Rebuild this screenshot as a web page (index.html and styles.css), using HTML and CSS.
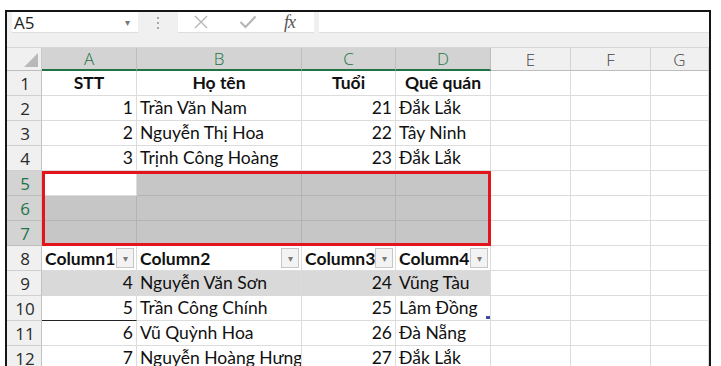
FILE: index.html
```html
<!DOCTYPE html>
<html lang="vi">
<head>
    <meta charset="UTF-8">
    <meta name="viewport" content="width=device-width, initial-scale=1.0">
    <title>Excel - chèn dòng trống</title>
    <link rel="stylesheet" href="styles.css">
</head>
<body>
    <div class="window">
        <div class="formula-bar">
            <div class="name-box">
                <span>A5</span>
                <span class="caret">▾</span>
            </div>
            <div class="grip"><i></i><i></i><i></i></div>
            <div class="fx-buttons">
                <svg class="btn-icon" width="16" height="14" viewBox="0 0 16 14">
                    <path d="M2 1 L14 13 M14 1 L2 13" stroke="#b4b4b4" stroke-width="1.3" fill="none"/>
                </svg>
                <svg class="btn-icon" width="18" height="14" viewBox="0 0 18 14">
                    <path d="M1.5 7 L6.5 12 L16.5 1.5" stroke="#b4b4b4" stroke-width="2" fill="none"/>
                </svg>
                <span class="fx">fx</span>
            </div>
            <div class="formula-input"></div>
        </div>

        <div class="sheet">
            <!-- column headers -->
            <div class="corner"></div>
            <div class="ch sel">A</div>
            <div class="ch sel">B</div>
            <div class="ch sel">C</div>
            <div class="ch sel">D</div>
            <div class="ch">E</div>
            <div class="ch">F</div>
            <div class="ch">G</div>

            <!-- 1 -->
            <div class="rh">1</div>
            <div class="c hd">STT</div>
            <div class="c hd">Họ tên</div>
            <div class="c hd">Tuổi</div>
            <div class="c hd">Quê quán</div>
            <div class="c"></div><div class="c"></div><div class="c"></div>

            <!-- 2 -->
            <div class="rh">2</div>
            <div class="c num">1</div>
            <div class="c">Trần Văn Nam</div>
            <div class="c num">21</div>
            <div class="c">Đắk Lắk</div>
            <div class="c"></div><div class="c"></div><div class="c"></div>

            <!-- 3 -->
            <div class="rh">3</div>
            <div class="c num">2</div>
            <div class="c">Nguyễn Thị Hoa</div>
            <div class="c num">22</div>
            <div class="c">Tây Ninh</div>
            <div class="c"></div><div class="c"></div><div class="c"></div>

            <!-- 4 -->
            <div class="rh">4</div>
            <div class="c num">3</div>
            <div class="c">Trịnh Công Hoàng</div>
            <div class="c num">23</div>
            <div class="c">Đắk Lắk</div>
            <div class="c"></div><div class="c"></div><div class="c"></div>

            <!-- 5-7 selected blank rows -->
            <div class="rh sel">5</div>
            <div class="c active"></div>
            <div class="c sel"></div><div class="c sel"></div><div class="c sel"></div>
            <div class="c"></div><div class="c"></div><div class="c"></div>

            <div class="rh sel">6</div>
            <div class="c sel"></div><div class="c sel"></div><div class="c sel"></div><div class="c sel"></div>
            <div class="c"></div><div class="c"></div><div class="c"></div>

            <div class="rh sel">7</div>
            <div class="c sel"></div><div class="c sel"></div><div class="c sel"></div><div class="c sel"></div>
            <div class="c"></div><div class="c"></div><div class="c"></div>

            <!-- 8 table header -->
            <div class="rh">8</div>
            <div class="c th">Column1<span class="drop">▾</span></div>
            <div class="c th">Column2<span class="drop">▾</span></div>
            <div class="c th">Column3<span class="drop">▾</span></div>
            <div class="c th">Column4<span class="drop">▾</span></div>
            <div class="c"></div><div class="c"></div><div class="c"></div>

            <!-- 9 -->
            <div class="rh">9</div>
            <div class="c num band">4</div>
            <div class="c band">Nguyễn Văn Sơn</div>
            <div class="c num band">24</div>
            <div class="c band">Vũng Tàu</div>
            <div class="c"></div><div class="c"></div><div class="c"></div>

            <!-- 10 -->
            <div class="rh">10</div>
            <div class="c num last">5</div>
            <div class="c">Trần Công Chính</div>
            <div class="c num">25</div>
            <div class="c resize">Lâm Đồng</div>
            <div class="c"></div><div class="c"></div><div class="c"></div>

            <!-- 11 -->
            <div class="rh">11</div>
            <div class="c num">6</div>
            <div class="c">Vũ Quỳnh Hoa</div>
            <div class="c num">26</div>
            <div class="c">Đà Nẵng</div>
            <div class="c"></div><div class="c"></div><div class="c"></div>

            <!-- 12 -->
            <div class="rh">12</div>
            <div class="c num">7</div>
            <div class="c">Nguyễn Hoàng Hưng</div>
            <div class="c num">27</div>
            <div class="c">Đắk Lắk</div>
            <div class="c"></div><div class="c"></div><div class="c"></div>

            <div class="marquee"></div>
        </div>
    </div>
</body>
</html>
```

FILE: styles.css
```css
body {
    margin: 0;
    background: #fff;
    overflow: hidden;
    font-family: "Open Sans", sans-serif;
}

.window {
    margin: 10px 0 0 5px;
    width: 706px;
    height: 356px;
    box-sizing: border-box;
    border: 2px solid #151515;
    border-bottom: none;
    background: #f0f0f0;
    overflow: hidden;
}

/* formula bar */
.formula-bar {
    display: flex;
    height: 36px;
    box-sizing: border-box;
    border-bottom: 1px solid #d6d6d6;
}

.name-box {
    margin-left: 5px;
    width: 126px;
    height: 21px;
    background: #fff;
    border-bottom: 1px solid #dedede;
    box-sizing: border-box;
    display: flex;
    align-items: center;
    justify-content: space-between;
    padding: 0 8px 0 2px;
    font-size: 17px;
    color: #222;
}

.name-box .caret {
    font-size: 10px;
    color: #777;
}

.grip {
    width: 40px;
    height: 21px;
    display: flex;
    flex-direction: column;
    align-items: center;
    justify-content: center;
    gap: 3px;
}

.grip i {
    width: 2px;
    height: 2px;
    background: #a8a8a8;
}

.fx-buttons {
    width: 136px;
    height: 21px;
    background: #fff;
    border-bottom: 1px solid #dedede;
    box-sizing: border-box;
    display: flex;
    align-items: center;
    padding: 0 0 0 15px;
    gap: 30px;
}

.fx {
    font-family: "Liberation Serif", serif;
    font-style: italic;
    font-size: 18px;
    color: #555;
    margin-left: -3px;
    letter-spacing: -1px;
}

.formula-input {
    margin-left: 5px;
    flex: 1;
    height: 21px;
    background: #fff;
    border-bottom: 1px solid #dedede;
    box-sizing: border-box;
}

/* sheet grid */
.sheet {
    position: relative;
    display: grid;
    grid-template-columns: 35px 95px 165px 94px 95px 80px 80px 1fr;
    grid-template-rows: 23px repeat(12, 25px);
    background: #fff;
    font-family: Lato, sans-serif;
    font-size: 17.5px;
    color: #111;
}

.corner {
    background: #f0f0f0;
    border-right: 1px solid #c9c9c9;
    border-bottom: 1px solid #bdbdbd;
    position: relative;
}

.corner::after {
    content: "";
    position: absolute;
    right: 3px;
    bottom: 3px;
    border-style: solid;
    border-width: 0 0 14px 14px;
    border-color: transparent transparent #b9b9b9 transparent;
}

.ch {
    background: #f0f0f0;
    border-right: 1px solid #d2d2d2;
    border-bottom: 1px solid #bdbdbd;
    display: flex;
    align-items: center;
    justify-content: center;
    font-family: "Open Sans", sans-serif;
    font-weight: 300;
    font-size: 17px;
    color: #444;
}

.ch.sel {
    background: #d3d3d3;
    color: #217346;
    border-right-color: #bdbdbd;
    border-bottom: 2px solid #217346;
}

.rh {
    background: #f0f0f0;
    border-right: 1px solid #c3c3c3;
    border-bottom: 1px solid #d0d0d0;
    display: flex;
    align-items: center;
    justify-content: center;
    font-family: "Open Sans", sans-serif;
    font-size: 17px;
    color: #2a2a2a;
    padding-left: 2px;
}

.rh.sel {
    background: #d3d3d3;
    color: #217346;
    border-bottom-color: #bdbdbd;
}

.c {
    box-sizing: border-box;
    border-right: 1px solid #dcdcdc;
    border-bottom: 1px solid #dcdcdc;
    display: flex;
    align-items: flex-end;
    padding: 0 3px 2px 3px;
    white-space: nowrap;
    overflow: hidden;
}

.c.num {
    justify-content: flex-end;
}

.c.hd {
    justify-content: center;
    font-weight: 700;
}

.c.sel {
    background: #c6c6c6;
    border-color: #b3b3b3;
}

.c.active {
    background: #fff;
}

.c.band {
    background: #d9d9d9;
    border-bottom-color: #d9d9d9;
}

.c.last {
    border-bottom-color: #222;
}

.c.th {
    font-weight: 700;
    justify-content: space-between;
    align-items: center;
    padding: 0 2px 0 3px;
}

.drop {
    width: 18px;
    height: 20px;
    box-sizing: border-box;
    background: #f3f3f3;
    border: 1px solid #c6c6c6;
    display: flex;
    align-items: center;
    justify-content: center;
    font-weight: 400;
    font-size: 10px;
    color: #7a7a7a;
}

.c.resize {
    position: relative;
    overflow: visible;
}

.c.resize::after {
    content: "";
    position: absolute;
    right: 0;
    bottom: 1px;
    width: 4px;
    height: 3px;
    background: #3c4aa8;
}

/* red selection marquee over A5:D7, laid over the cells */
.marquee {
    position: absolute;
    inset: 0;
    grid-row: 6 / 9;
    grid-column: 2 / 6;
    border: 3px solid #e2141c;
    z-index: 1;
}
```
